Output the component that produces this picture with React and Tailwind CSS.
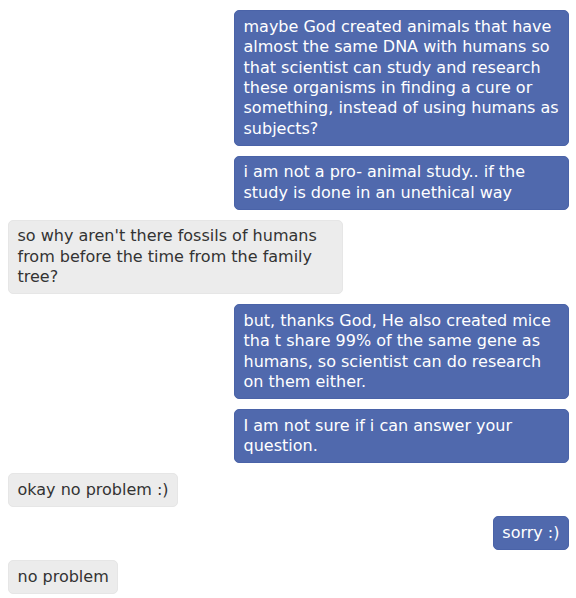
import React from "react";

const messages = [
  { id: 1, me: true, text: "maybe God created animals that have almost the same DNA with humans so that scientist can study and research these organisms in finding a cure or something, instead of using humans as subjects?" },
  { id: 2, me: true, text: "i am not a pro- animal study.. if the study is done in an unethical way" },
  { id: 3, me: false, text: "so why aren't there fossils of humans from before the time from the family tree?" },
  { id: 4, me: true, text: "but, thanks God, He also created mice tha t share 99% of the same gene as humans, so scientist can do research on them either." },
  { id: 5, me: true, text: "I am not sure if i can answer your question." },
  { id: 6, me: false, text: "okay no problem :)" },
  { id: 7, me: true, text: "sorry :)" },
  { id: 8, me: false, text: "no problem" },
];

export default function App() {
  return (
    <div
      className="w-full min-h-screen bg-white flex flex-col gap-[9.6px] pl-[8px] pr-[7px] pt-[10px]"
      style={{ fontFamily: '"DejaVu Sans", Verdana, sans-serif' }}
    >
      {messages.map((msg) => (
        <div key={msg.id} className={`flex ${msg.me ? "justify-end" : "justify-start"}`}>
          <div
            className={`max-w-[335px] rounded-[5px] border px-[8.5px] py-[5.8px] text-[16px] leading-[20.4px] ${
              msg.me
                ? "bg-[#5069ad] border-[#4a63a8] text-white"
                : "bg-[#ececec] border-[#e6e6e6] text-[#333333]"
            }`}
          >
            {msg.text}
          </div>
        </div>
      ))}
    </div>
  );
}
